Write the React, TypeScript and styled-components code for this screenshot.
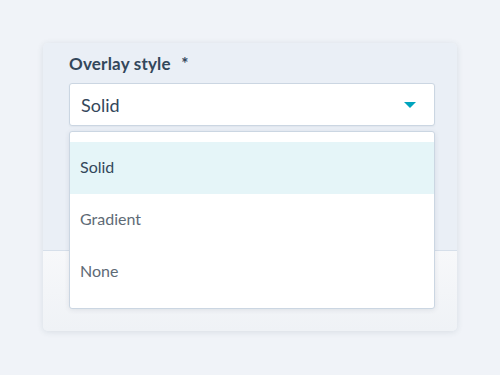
import React, { useState } from 'react'
import styled, { createGlobalStyle } from 'styled-components'

const GlobalStyle = createGlobalStyle`
    html, body {
        margin: 0;
        padding: 0;
        background: #f0f3f8;
        font-family: 'Lato', 'Noto Sans', sans-serif;
    }
`

const options = ['Solid', 'Gradient', 'None']

const App: React.FC = () => {

    // выбранный стиль оверлея
    const [value, setValue] = useState('Solid')

    return (
        <Page>
            <GlobalStyle />
            <Card>
                <CardBody>
                    <Label>
                        Overlay style <Required>*</Required>
                    </Label>
                    <SelectWrapper>
                        <SelectButton type="button">
                            <span>{value}</span>
                            <Caret />
                        </SelectButton>
                        <Menu>
                            {options.map((option) => (
                                <Option
                                    key={option}
                                    selected={option === value}
                                    onClick={() => setValue(option)}
                                >
                                    {option}
                                </Option>
                            ))}
                        </Menu>
                    </SelectWrapper>
                </CardBody>
                <CardFooter />
            </Card>
        </Page>
    )
}

const Page = styled.div`
    width: 500px;
    height: 375px;
    box-sizing: border-box;
    padding: 43px 0 0 43px;
`

const Card = styled.div`
    width: 414px;
    border-radius: 5px;
    box-shadow: 0 1px 6px rgba(45, 62, 80, 0.12);
    display: flex;
    flex-direction: column;
`

const CardBody = styled.div`
    height: 208px;
    box-sizing: border-box;
    padding: 11px 22px 0 26px;
    background: #eaeff6;
    border-radius: 5px 5px 0 0;
    border-bottom: 1px solid #d6dfea;
`

const CardFooter = styled.div`
    height: 80px;
    background: linear-gradient(180deg, #f7f8fa 0%, #eff2f6 100%);
    border-radius: 0 0 5px 5px;
`

const Label = styled.div`
    font-size: 17px;
    font-weight: 700;
    letter-spacing: 0.2px;
    color: #33475b;
    line-height: 20px;
    margin-bottom: 9px;
`

const Required = styled.span`
    margin-left: 6px;
`

const SelectWrapper = styled.div`
    position: relative;
`

const SelectButton = styled.button`
    width: 100%;
    height: 43px;
    box-sizing: border-box;
    display: flex;
    align-items: center;
    justify-content: space-between;
    padding: 0 18px 0 11px;
    background: #fff;
    border: 1px solid #cbd6e2;
    border-radius: 3px;
    font-family: inherit;
    font-size: 18px;
    color: #33475b;
    box-shadow: 0 1px 2px rgba(45, 62, 80, 0.06);
`

const Caret = styled.span`
    width: 0;
    height: 0;
    border-left: 6px solid transparent;
    border-right: 6px solid transparent;
    border-top: 6px solid #00a4bd;
`

const Menu = styled.div`
    position: absolute;
    top: calc(100% + 5px);
    left: 0;
    right: 0;
    box-sizing: border-box;
    padding: 10px 0;
    background: #fff;
    border: 1px solid #cbd6e2;
    border-radius: 3px;
    box-shadow: 0 1px 5px rgba(45, 62, 80, 0.1);
`

const Option = styled.div<{ selected?: boolean }>`
    height: 52px;
    box-sizing: border-box;
    display: flex;
    align-items: center;
    padding: 0 10px 3px;
    font-size: 16px;
    color: ${({ selected }) => (selected ? '#33475b' : '#5e6a76')};
    background: ${({ selected }) => (selected ? '#e5f5f8' : '#fff')};
    cursor: pointer;
`

export default App
